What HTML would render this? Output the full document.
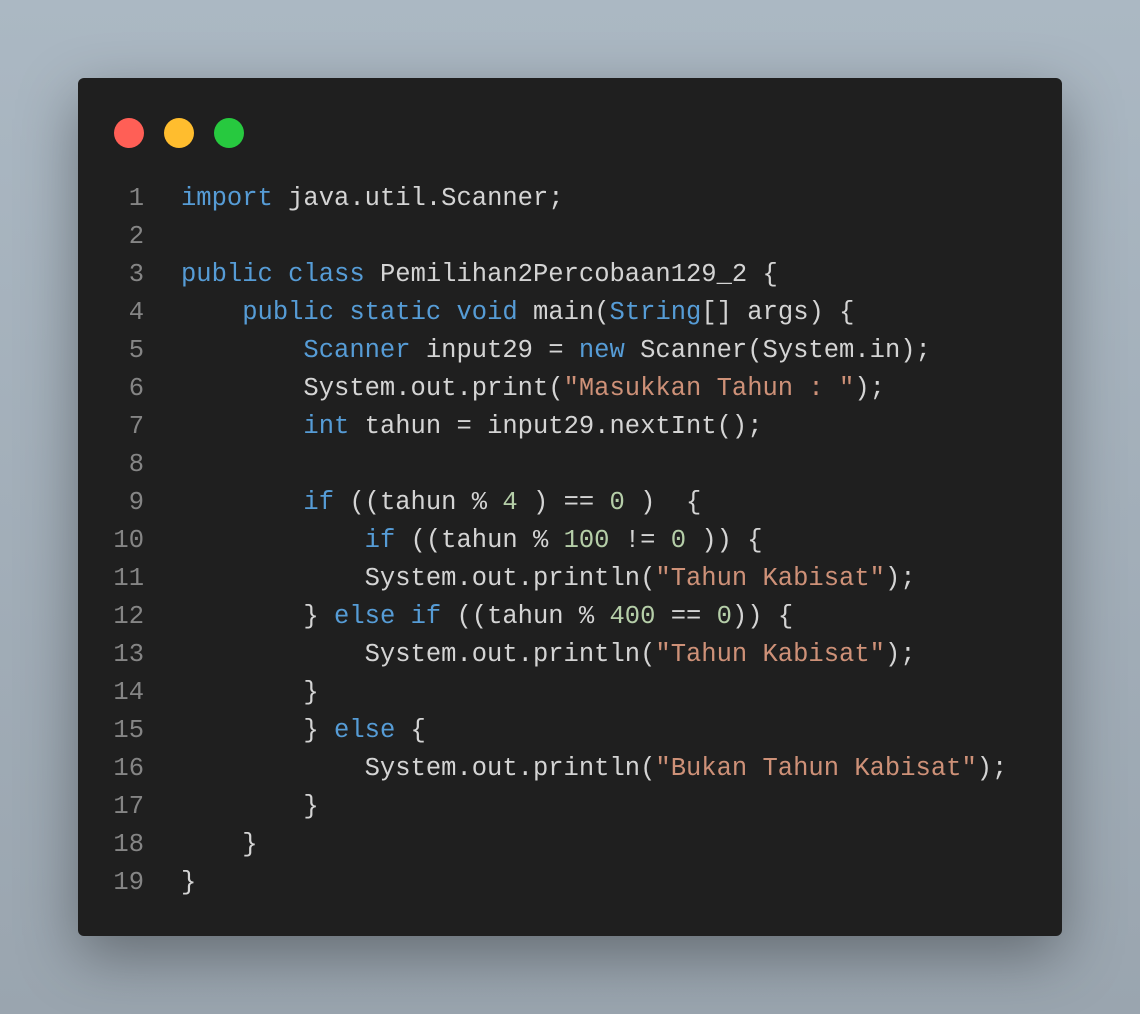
<!DOCTYPE html>
<html><head><style>
body{margin:0;width:1140px;height:1014px;background:linear-gradient(180deg,#abb8c3,#9aa5af);overflow:hidden;position:relative}
.win{position:absolute;left:78px;top:78px;width:984px;height:858px;background:#1f1f1f;border-radius:6px;box-shadow:0 20px 60px rgba(0,0,0,.35)}
.dot{position:absolute;top:40px;width:30px;height:30px;border-radius:50%}
pre{margin:0;position:absolute;top:102px;font-family:"Liberation Mono",monospace;font-size:25.5px;line-height:38px;color:#d4d4d4}
.ln{left:0;width:66px;text-align:right;color:#858585}
.code{left:103px}
.k{color:#569cd6}.s{color:#ce9178}.n{color:#b5cea8}
</style></head><body>
<div class="win">
<div class="dot" style="left:36px;background:#ff5f56"></div>
<div class="dot" style="left:86px;background:#ffbd2e"></div>
<div class="dot" style="left:136px;background:#27c93f"></div>
<pre class="ln">1
2
3
4
5
6
7
8
9
10
11
12
13
14
15
16
17
18
19</pre>
<pre class="code"><span class="k">import</span> java.util.Scanner;

<span class="k">public</span> <span class="k">class</span> Pemilihan2Percobaan129_2 {
    <span class="k">public</span> <span class="k">static</span> <span class="k">void</span> main(<span class="k">String</span>[] args) {
        <span class="k">Scanner</span> input29 = <span class="k">new</span> Scanner(System.in);
        System.out.print(<span class="s">"Masukkan Tahun : "</span>);
        <span class="k">int</span> tahun = input29.nextInt();

        <span class="k">if</span> ((tahun % <span class="n">4</span> ) == <span class="n">0</span> )  {
            <span class="k">if</span> ((tahun % <span class="n">100</span> != <span class="n">0</span> )) {
            System.out.println(<span class="s">"Tahun Kabisat"</span>);
        } <span class="k">else</span> <span class="k">if</span> ((tahun % <span class="n">400</span> == <span class="n">0</span>)) {
            System.out.println(<span class="s">"Tahun Kabisat"</span>);
        }
        } <span class="k">else</span> {
            System.out.println(<span class="s">"Bukan Tahun Kabisat"</span>);
        }
    }
}</pre>
</div>
</body></html>
